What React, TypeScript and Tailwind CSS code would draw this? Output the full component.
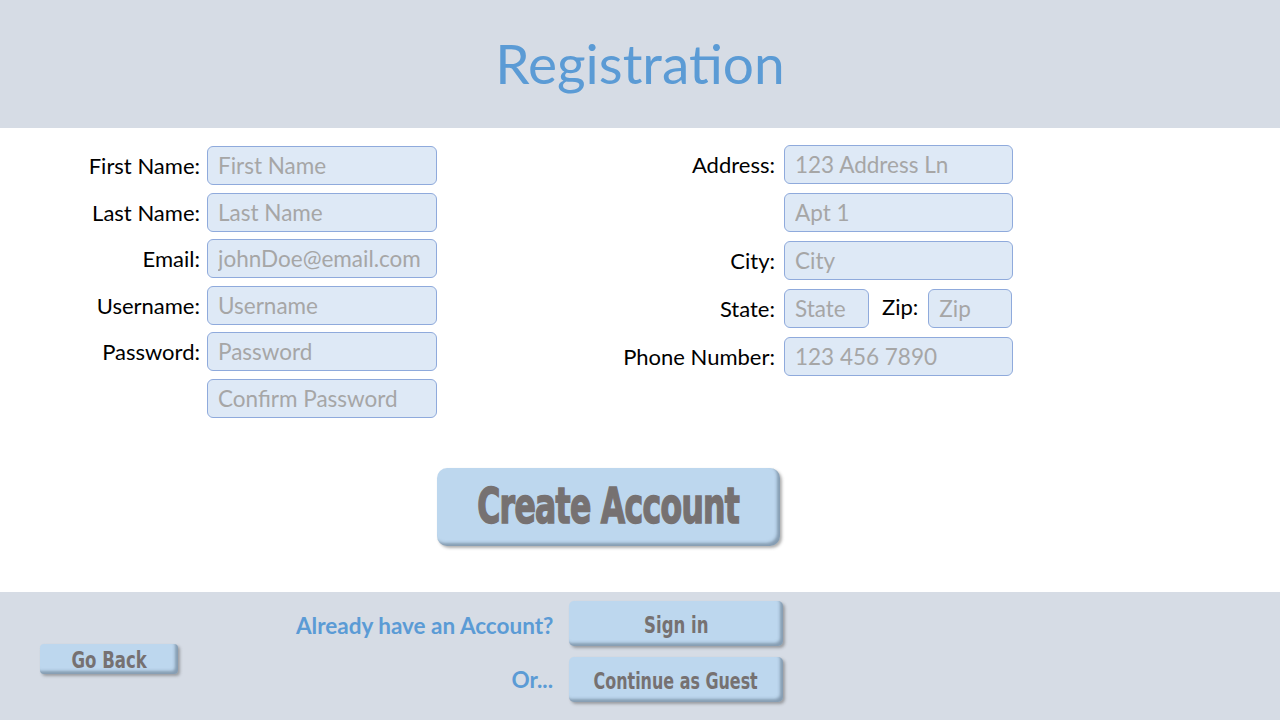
import React from 'react';

const field =
  'h-[39px] rounded-[6px] border border-[#8faadc] bg-[#dee9f6] px-[10px] text-[22.5px] text-[#a6a6a6] placeholder:text-[#a6a6a6] outline-none';

const label = 'text-[22px] text-black text-right leading-[39px] whitespace-nowrap';

const bevel =
  'bg-[#bdd7ee] text-[#767171] whitespace-nowrap shadow-[2px_2px_3px_rgba(80,80,80,0.45),inset_-3px_-3px_3px_rgba(80,100,120,0.5)]';

const condensed = { fontFamily: '"DejaVu Sans Condensed", "DejaVu Sans", sans-serif' };

export default function App() {
  return (
    <div className="w-[1280px] h-[720px] flex flex-col overflow-hidden bg-white" style={{ fontFamily: 'Lato, "Open Sans", sans-serif' }}>
      {/* Header */}
      <div className="h-[128px] bg-[#d6dce5] flex items-center justify-center">
        <h1 className="text-[55px] text-[#5b9bd5] leading-none pb-[2px]">Registration</h1>
      </div>

      {/* Form */}
      <div className="h-[464px] flex flex-col">
        <div className="flex pt-[18px]">
          <div className="grid grid-cols-[122px_230px] gap-x-[7px] gap-y-[7.5px] ml-[78px] auto-rows-[39px]">
            <span className={`${label} text-[22.5px]`}>First Name:</span>
            <input className={field} placeholder="First Name" />
            <span className={`${label} text-[22.5px]`}>Last Name:</span>
            <input className={field} placeholder="Last Name" />
            <span className={`${label} text-[22.5px]`}>Email:</span>
            <input className={`${field} px-[9px]`} placeholder="johnDoe@email.com" />
            <span className={`${label} text-[22.5px]`}>Username:</span>
            <input className={field} placeholder="Username" />
            <span className={`${label} text-[22.5px]`}>Password:</span>
            <input className={field} type="password" placeholder="Password" />
            <span />
            <input className={field} type="password" placeholder="Confirm Password" />
          </div>

          <div className="grid grid-cols-[175px_229px] gap-x-[9px] gap-y-[9px] ml-[163px] -mt-[1px] auto-rows-[39px] h-fit">
            <span className={label}>Address:</span>
            <input className={field} placeholder="123 Address Ln" />
            <span />
            <input className={field} placeholder="Apt 1" />
            <span className={label}>City:</span>
            <input className={field} placeholder="City" />
            <span className={label}>State:</span>
            <div className="flex items-center">
              <input className={`${field} w-[85px]`} placeholder="State" />
              <span className="text-[22px] text-black ml-[13px] mr-[10px] -mt-[4px]">Zip:</span>
              <input className={`${field} w-[84px]`} placeholder="Zip" />
            </div>
            <span className={label}>Phone Number:</span>
            <input className={field} placeholder="123 456 7890" />
          </div>
        </div>

        <div className="pl-[437px] mt-[50px]">
          <button
            className={`${bevel} w-[343px] h-[78px] rounded-[10px] text-[50px] font-bold leading-none [-webkit-text-stroke:1.5px_#767171] flex items-center justify-center overflow-visible`}
            style={condensed}
          >
            <span className="inline-block scale-x-[0.7] tracking-[-1px] pb-[2px] shrink-0">Create Account</span>
          </button>
        </div>
      </div>

      {/* Footer */}
      <div className="flex-1 bg-[#d6dce5] flex items-start">
        <button
          className={`${bevel} mt-[52px] ml-[40px] w-[138px] h-[30px] rounded-[4px] text-[23px] font-bold leading-none pt-[3px]`}
          style={condensed}
        >
          <span className="inline-block scale-x-[0.8]">Go Back</span>
        </button>

        <div className="ml-[118px] mt-[9px] grid grid-cols-[257px_214px] gap-x-[16px] gap-y-[11px] auto-rows-[45px]">
          <span className="text-[22.5px] font-bold text-[#5b9bd5] text-right leading-[45px] pt-[2px] whitespace-nowrap">Already have an Account?</span>
          <button className={`${bevel} rounded-[5px] text-[23px] font-bold pt-[4px] flex items-center justify-center`} style={condensed}>
            <span className="inline-block scale-x-[0.8] shrink-0">Sign in</span>
          </button>
          <span className="text-[22.5px] font-bold text-[#5b9bd5] text-right leading-[45px] whitespace-nowrap">Or...</span>
          <button className={`${bevel} rounded-[5px] text-[23px] font-bold pt-[4px] flex items-center justify-center`} style={condensed}>
            <span className="inline-block scale-x-[0.77] shrink-0">Continue as Guest</span>
          </button>
        </div>
      </div>
    </div>
  );
}
